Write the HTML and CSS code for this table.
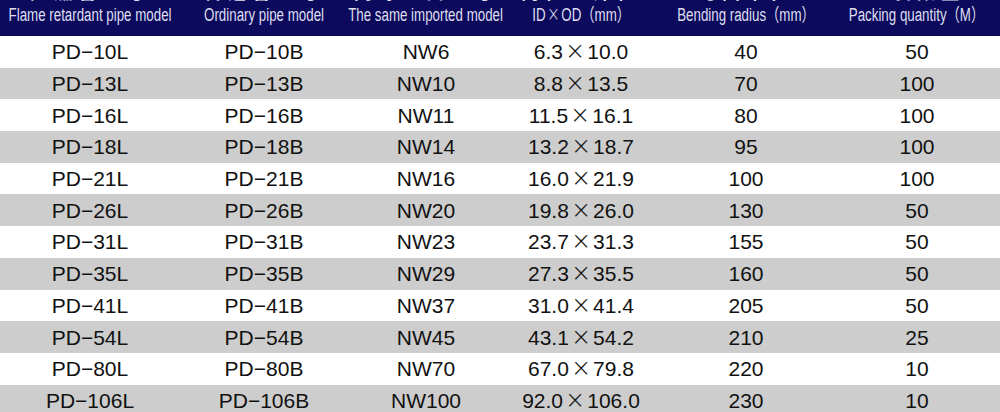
FILE: index.html
```html
<!DOCTYPE html>
<html lang="en">
<head>
    <meta charset="UTF-8">
    <title>Pipe specifications</title>
    <link rel="stylesheet" href="styles.css">
</head>
<body>
    <div class="spec-table">
        <div class="row head">
            <div class="cell"><span class="cn">阻燃管型号</span><span class="en">Flame retardant pipe model</span></div>
            <div class="cell"><span class="cn">普通管型号</span><span class="en">Ordinary pipe model</span></div>
            <div class="cell"><span class="cn">同等进口型号</span><span class="en">The same imported model</span></div>
            <div class="cell"><span class="cn">内径×外径</span><span class="en">ID<span class="x">×</span>OD（mm）</span></div>
            <div class="cell"><span class="cn">弯曲半径</span><span class="en">Bending radius（mm）</span></div>
            <div class="cell"><span class="cn">包装数量</span><span class="en">Packing quantity（M）</span></div>
        </div>

        <div class="row"><div class="cell">PD−10L</div><div class="cell">PD−10B</div><div class="cell">NW6</div><div class="cell">6.3<span class="x">×</span>10.0</div><div class="cell">40</div><div class="cell">50</div></div>
        <div class="row alt"><div class="cell">PD−13L</div><div class="cell">PD−13B</div><div class="cell">NW10</div><div class="cell">8.8<span class="x">×</span>13.5</div><div class="cell">70</div><div class="cell">100</div></div>
        <div class="row"><div class="cell">PD−16L</div><div class="cell">PD−16B</div><div class="cell">NW11</div><div class="cell">11.5<span class="x">×</span>16.1</div><div class="cell">80</div><div class="cell">100</div></div>
        <div class="row alt"><div class="cell">PD−18L</div><div class="cell">PD−18B</div><div class="cell">NW14</div><div class="cell">13.2<span class="x">×</span>18.7</div><div class="cell">95</div><div class="cell">100</div></div>
        <div class="row"><div class="cell">PD−21L</div><div class="cell">PD−21B</div><div class="cell">NW16</div><div class="cell">16.0<span class="x">×</span>21.9</div><div class="cell">100</div><div class="cell">100</div></div>
        <div class="row alt"><div class="cell">PD−26L</div><div class="cell">PD−26B</div><div class="cell">NW20</div><div class="cell">19.8<span class="x">×</span>26.0</div><div class="cell">130</div><div class="cell">50</div></div>
        <div class="row"><div class="cell">PD−31L</div><div class="cell">PD−31B</div><div class="cell">NW23</div><div class="cell">23.7<span class="x">×</span>31.3</div><div class="cell">155</div><div class="cell">50</div></div>
        <div class="row alt"><div class="cell">PD−35L</div><div class="cell">PD−35B</div><div class="cell">NW29</div><div class="cell">27.3<span class="x">×</span>35.5</div><div class="cell">160</div><div class="cell">50</div></div>
        <div class="row"><div class="cell">PD−41L</div><div class="cell">PD−41B</div><div class="cell">NW37</div><div class="cell">31.0<span class="x">×</span>41.4</div><div class="cell">205</div><div class="cell">50</div></div>
        <div class="row alt"><div class="cell">PD−54L</div><div class="cell">PD−54B</div><div class="cell">NW45</div><div class="cell">43.1<span class="x">×</span>54.2</div><div class="cell">210</div><div class="cell">25</div></div>
        <div class="row"><div class="cell">PD−80L</div><div class="cell">PD−80B</div><div class="cell">NW70</div><div class="cell">67.0<span class="x">×</span>79.8</div><div class="cell">220</div><div class="cell">10</div></div>
        <div class="row alt"><div class="cell">PD−106L</div><div class="cell">PD−106B</div><div class="cell">NW100</div><div class="cell">92.0<span class="x">×</span>106.0</div><div class="cell">230</div><div class="cell">10</div></div>
    </div>
</body>
</html>
```

FILE: styles.css
```css
/* Base */
body {
    margin: 0;
    background: #ffffff;
    font-family: "Liberation Sans", Arial, "Noto Sans CJK SC", sans-serif;
    color: #111111;
    overflow: hidden;
}

.spec-table {
    width: 1000px;
}

/* Rows */
.row {
    display: grid;
    grid-template-columns: 180px 168px 156px 154px 176px 166px;
    height: 31.7px;
    align-items: center;
    background: #ffffff;
}

.row.alt {
    background: #cdcdcd;
}

.cell {
    text-align: center;
    font-size: 21px;
    line-height: 1;
    white-space: nowrap;
}

.cell .x {
    font-family: "DejaVu Sans", sans-serif;
    font-size: 1.15em;
    font-weight: 300;
    line-height: 0;
    margin: 0 2px;
}

/* Header: the chinese line is cut off by the top edge */
.row.head {
    height: 36px;
    grid-template-rows: 36px;
    background: #0c0a5c;
    align-items: stretch;
    overflow: hidden;
}

.head .cell {
    height: 36px;
    min-height: 0;
    box-sizing: border-box;
    display: flex;
    flex-direction: column;
    align-items: center;
    justify-content: flex-end;
    padding-bottom: 12px;
    overflow: hidden;
    color: #dfdff0;
    font-size: 18px;
}

.head .cn {
    flex: none;
    font-family: "Noto Sans CJK SC", sans-serif;
    font-size: 18px;
    font-weight: 700;
    line-height: 18px;
    letter-spacing: 6px;
    margin-bottom: 6px;
}

.head .en {
    flex: none;
    display: inline-block;
    line-height: 18px;
    transform: scaleX(0.74);
}
```
